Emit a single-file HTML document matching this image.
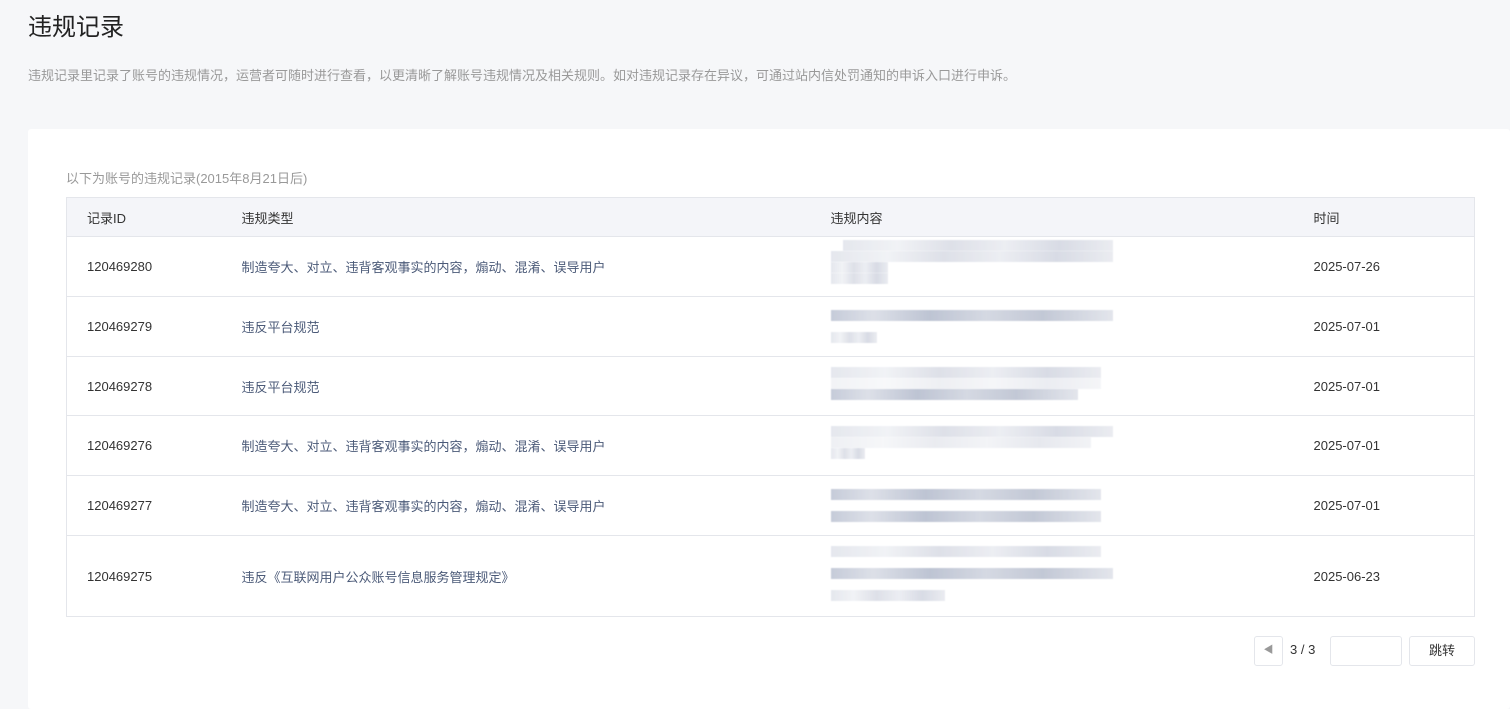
<!DOCTYPE html>
<html><head><meta charset="utf-8"><style>
*{margin:0;padding:0;box-sizing:border-box}
body{width:1510px;height:694px;background:#f6f7f9;font-family:"Liberation Sans","Noto Sans CJK SC",sans-serif;overflow:hidden;position:relative;color:#333}
h1{position:absolute;left:28px;top:7px;font-size:24px;font-weight:normal;color:#222}
.desc{position:absolute;left:28px;top:65px;font-size:13px;color:#999}
.card{position:absolute;left:28px;top:129px;width:1482px;height:580px;background:#fff;border-radius:3px}
.sub{position:absolute;left:66px;top:168px;font-size:13px;color:#999}
table{position:absolute;left:66px;top:197px;width:1409px;border-collapse:collapse;border:1px solid #e4e6eb;font-size:13px}
th{background:#f4f5f9;height:39px;font-weight:normal;text-align:left;color:#333;border-bottom:1px solid #e4e6eb}
td{border-bottom:1px solid #e4e6eb;color:#333;position:relative}
td.t{color:#4b5a78}
th:nth-child(1),td:nth-child(1){padding-left:20px;width:175px}
th:nth-child(2),td:nth-child(2){width:589px}
th:nth-child(3),td:nth-child(3){width:483px}
.bl{position:absolute;left:0;height:11px;filter:blur(0.6px);opacity:.8}
.b1{background:linear-gradient(90deg,#dfe2ea,#eef0f4 20%,#d6d9e3 40%,#e8eaf0 60%,#cfd3df 80%,#e6e8ee)}
.b2{background:linear-gradient(90deg,#b8bfd0,#d5d9e3 15%,#aeb6c9 35%,#cbd0dc 55%,#b4bbcc 75%,#dde0e8)}
.pg{position:absolute;top:636px;height:30px;border:1px solid #e4e6eb;border-radius:3px;background:#fff;font-size:13px;text-align:center;line-height:28px}
</style></head><body>
<h1>违规记录</h1>
<div class="desc">违规记录里记录了账号的违规情况，运营者可随时进行查看，以更清晰了解账号违规情况及相关规则。如对违规记录存在异议，可通过站内信处罚通知的申诉入口进行申诉。</div>
<div class="card"></div>
<div class="sub">以下为账号的违规记录(2015年8月21日后)</div>
<table>
<tr><th>记录ID</th><th>违规类型</th><th>违规内容</th><th>时间</th></tr>
<tr style="height:60px"><td>120469280</td><td class="t">制造夸大、对立、违背客观事实的内容，煽动、混淆、误导用户</td><td><div class="bl b1" style="top:3px;left:12px;width:270px"></div><div class="bl b1" style="top:14px;left:0;width:282px"></div><div class="bl b1" style="top:25px;width:57px"></div><div class="bl b1" style="top:36px;width:57px"></div></td><td>2025-07-26</td></tr>
<tr style="height:60px"><td>120469279</td><td class="t">违反平台规范</td><td><div class="bl b2" style="top:13px;width:282px"></div><div class="bl b1" style="top:35px;width:46px"></div></td><td>2025-07-01</td></tr>
<tr style="height:59px"><td>120469278</td><td class="t">违反平台规范</td><td><div class="bl b1" style="top:10px;width:270px"></div><div class="bl b1" style="top:21px;width:270px;opacity:.4"></div><div class="bl b2" style="top:32px;width:247px"></div></td><td>2025-07-01</td></tr>
<tr style="height:60px"><td>120469276</td><td class="t">制造夸大、对立、违背客观事实的内容，煽动、混淆、误导用户</td><td><div class="bl b1" style="top:10px;width:282px"></div><div class="bl b1" style="top:21px;width:260px;opacity:.5"></div><div class="bl b1" style="top:32px;width:34px"></div></td><td>2025-07-01</td></tr>
<tr style="height:60px"><td>120469277</td><td class="t">制造夸大、对立、违背客观事实的内容，煽动、混淆、误导用户</td><td><div class="bl b2" style="top:13px;width:270px"></div><div class="bl b2" style="top:35px;width:270px"></div></td><td>2025-07-01</td></tr>
<tr style="height:81px"><td>120469275</td><td class="t">违反《互联网用户公众账号信息服务管理规定》</td><td><div class="bl b1" style="top:10px;width:270px"></div><div class="bl b2" style="top:32px;width:282px"></div><div class="bl b1" style="top:54px;width:114px"></div></td><td>2025-06-23</td></tr>
</table>
<div class="pg" style="left:1254px;width:29px;color:#999;font-size:10px">◀</div>
<div style="position:absolute;left:1290px;top:642px;font-size:13px;color:#333">3 / 3</div>
<div class="pg" style="left:1330px;width:72px"></div>
<div class="pg" style="left:1409px;width:66px">跳转</div>
</body></html>
